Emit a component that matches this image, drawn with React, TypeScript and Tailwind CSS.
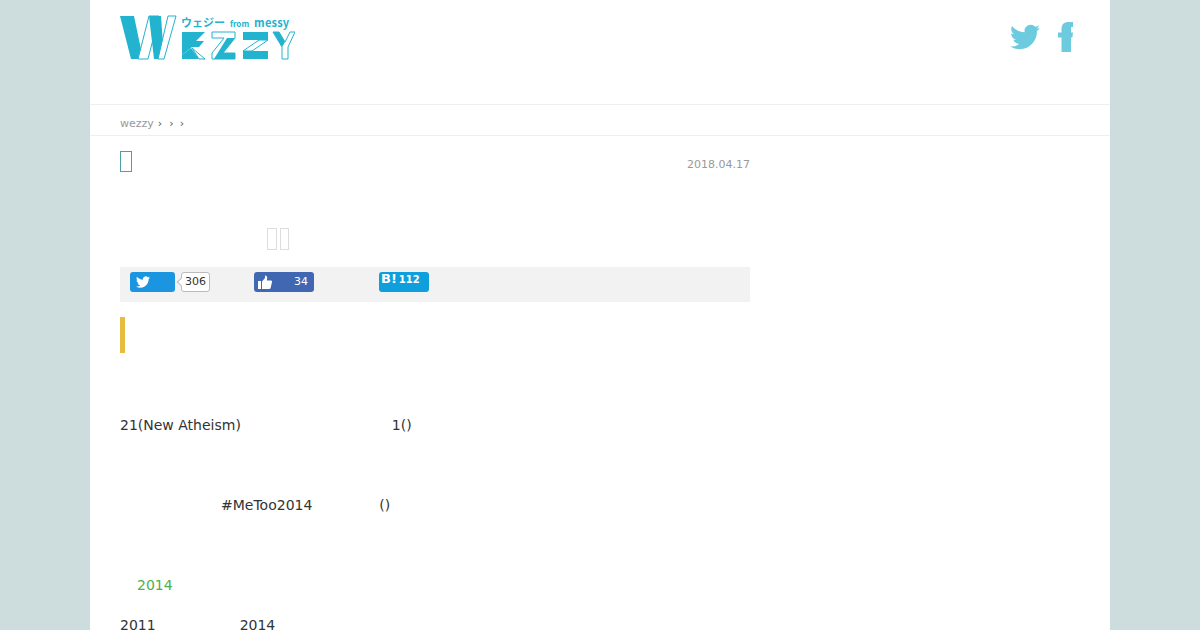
import React from 'react'

function Logo() {
  return (
    <div className="relative w-[175px] h-[45px]">
      <svg width="175" height="45" viewBox="0 0 175 45" fill="none">
        {/* W */}
        <path d="M0 1h14l9 43H11z" fill="#22b3cf" />
        <path d="M18 44L29 1h10L28 44z" fill="#ffffff" stroke="#22b3cf" strokeWidth="1" />
        <path d="M29 1h12l3 43H34z" fill="#22b3cf" />
        <path d="M38 44L48 1h8L44 44z" fill="#ffffff" stroke="#22b3cf" strokeWidth="1" />
        {/* E */}
        <path d="M62 17h23l-9 9h8l-5 6H72l-10 8z" fill="#22b3cf" />
        <path d="M62 40l9-7 8 11H62z" fill="#22b3cf" />
        <path d="M72 33l13 11h-6z" fill="#ffffff" stroke="#22b3cf" strokeWidth="1" />
        {/* first Z */}
        <path d="M92 17h23v6L103 38h12v6H92v-6l12-15H92z" fill="#ffffff" stroke="#22b3cf" strokeWidth="1" />
        <path d="M107 23h8L103 38h12v6H94z" fill="#22b3cf" />
        {/* second Z */}
        <path d="M123 17h25v8h-25z" fill="#22b3cf" />
        <path d="M148 25l-16 11h-9l16-11z" fill="#ffffff" stroke="#22b3cf" strokeWidth="1" />
        <path d="M123 36h25v8h-25z" fill="#22b3cf" />
        {/* Y */}
        <path d="M153 17h6l6 10 5-10h5l-7 15v12h-6V32z" fill="#ffffff" stroke="#22b3cf" strokeWidth="1" />
        <path d="M153 17h6l6 10-3 5z" fill="#22b3cf" />
      </svg>
      <span className="absolute left-[61px] top-[0px] flex items-baseline text-[11px] leading-[14px] font-bold text-[#22b3cf] whitespace-nowrap [font-family:'Noto_Sans_CJK_JP','DejaVu_Sans',sans-serif]">
        <span>ウェジー</span>
        <span className="ml-[5px] text-[8px]">from</span>
        <span className="ml-[5px] tracking-[0.2px]">messy</span>
      </span>
    </div>
  )
}

function TwitterIcon({ size, color }: { size: number; color: string }) {
  return (
    <svg width={size} height={size} viewBox="0 0 24 24" fill={color}>
      <path d="M23.95 4.57a10 10 0 0 1-2.82.77 4.96 4.96 0 0 0 2.16-2.72c-.95.55-2 .96-3.12 1.19a4.92 4.92 0 0 0-8.38 4.48C7.69 8.1 4.07 6.13 1.64 3.16a4.82 4.82 0 0 0-.66 2.47c0 1.71.87 3.21 2.19 4.1a4.9 4.9 0 0 1-2.23-.61v.06c0 2.39 1.7 4.38 3.95 4.83a5 5 0 0 1-2.21.08 4.94 4.94 0 0 0 4.6 3.42A9.87 9.87 0 0 1 0 19.54a14 14 0 0 0 7.56 2.21c9.05 0 14-7.5 14-13.98 0-.21 0-.42-.02-.63a9.94 9.94 0 0 0 2.41-2.57z" />
    </svg>
  )
}

function FacebookIcon() {
  return (
    <svg width="15" height="30" viewBox="0 0 15 30" fill="#6dcbe0">
      <path d="M3.500 30V15.500H0v-5h3.500V7C3.500 2.500 6 0 10.500 0H15v5h-1.500C13 5 13 6 13 7.500v3h2l-.6 5H13V30z" />
    </svg>
  )
}

function ThumbIcon() {
  return (
    <svg width="14" height="14" viewBox="0 0 14 14" fill="#ffffff">
      <path d="M0 6h3v8H0zM4 6.500 7 3V0.500c1.500 0 2.200 1.200 2.200 2.500L8.800 5.500H13c.8 0 1.200.7 1 1.400l-1.400 6c-.2.7-.7 1.100-1.400 1.100H4z" />
    </svg>
  )
}

export default function App() {
  return (
    <div className="h-[630px] overflow-hidden bg-[#cddcdc] [font-family:'DejaVu_Sans',sans-serif]">
      <div className="mx-auto h-full w-[1020px] bg-white">
        <header className="flex h-[105px] justify-between border-b border-[#eeeeee] pl-[30px] pr-[37px] pt-[15px]">
          <Logo />
          <div className="flex items-start gap-[18px] pt-[7px]">
            <TwitterIcon size={30} color="#6dcbe0" />
            <FacebookIcon />
          </div>
        </header>

        <nav className="flex h-[31px] items-center gap-[4px] border-b border-[#eeeeee] pl-[30px] pt-[9px] text-[11px] text-[#999999]">
          <span>wezzy</span>
          <span className="text-[#555555]">›</span>
          <span className="ml-[3px] text-[#555555]">›</span>
          <span className="ml-[2px] text-[#555555]">›</span>
        </nav>

        <main className="w-[690px] px-[30px]">
          {/* missing-glyph boxes from the page's unrendered title and author */}
          <div className="flex h-[92px] items-start justify-between pt-[15px]">
            <span className="h-[21px] w-[12px] border border-[#4f9fa8]" />
            <span className="pt-[6px] text-[11px] text-[#999999]">2018.04.17</span>
          </div>

          <div className="flex h-[39px] items-start gap-[3px] pl-[147px]">
            <span className="h-[22px] w-[10px] border border-[#dddddd]" />
            <span className="h-[22px] w-[9px] border border-[#dddddd]" />
          </div>

          <div className="flex h-[35px] items-start bg-[#f2f2f2] pl-[10px] pt-[5px]">
            <div className="flex h-[20px] w-[45px] items-center rounded-[3px] bg-[#1b95e0] pl-[6px]">
              <TwitterIcon size={14} color="#ffffff" />
            </div>
            <div className="relative ml-[6px] flex h-[20px] w-[29px] items-center justify-center rounded-[3px] border border-[#bbbbbb] bg-white text-[11px] text-[#333333]">
              306
              <span className="absolute left-[-4px] top-[6px] h-[6px] w-[6px] rotate-45 border-b border-l border-[#bbbbbb] bg-white" />
            </div>
            <div className="ml-[44px] flex h-[20px] w-[60px] items-center justify-between rounded-[3px] bg-[#4267b2] pl-[4px] pr-[6px] text-[11px] text-white">
              <ThumbIcon />
              <span>34</span>
            </div>
            <div className="ml-[65px] flex h-[20px] w-[50px] items-start gap-[2px] rounded-[3px] bg-[#0e9fdc] pl-[2px] font-bold text-white">
              <span className="text-[13px] leading-[14px]">B!</span>
              <span className="pt-[1px] text-[10px] leading-[14px]">112</span>
            </div>
          </div>

          <div className="mt-[15px] h-[36px] w-[5px] bg-[#e8bb41]" />

          <div className="mt-[52px] text-[14px] leading-[40px] text-[#333333]">
            <p className="flex"><span>21(New Atheism)</span><span className="ml-[151px]">1()</span></p>
            <p className="mt-[40px] flex pl-[101px]"><span>#MeToo2014</span><span className="ml-[67px]">()</span></p>
            <p className="mt-[40px] pl-[17px] text-[#4caf50]">2014</p>
            <p className="flex"><span>2011</span><span className="ml-[84px]">2014</span></p>
          </div>
        </main>
      </div>
    </div>
  )
}
